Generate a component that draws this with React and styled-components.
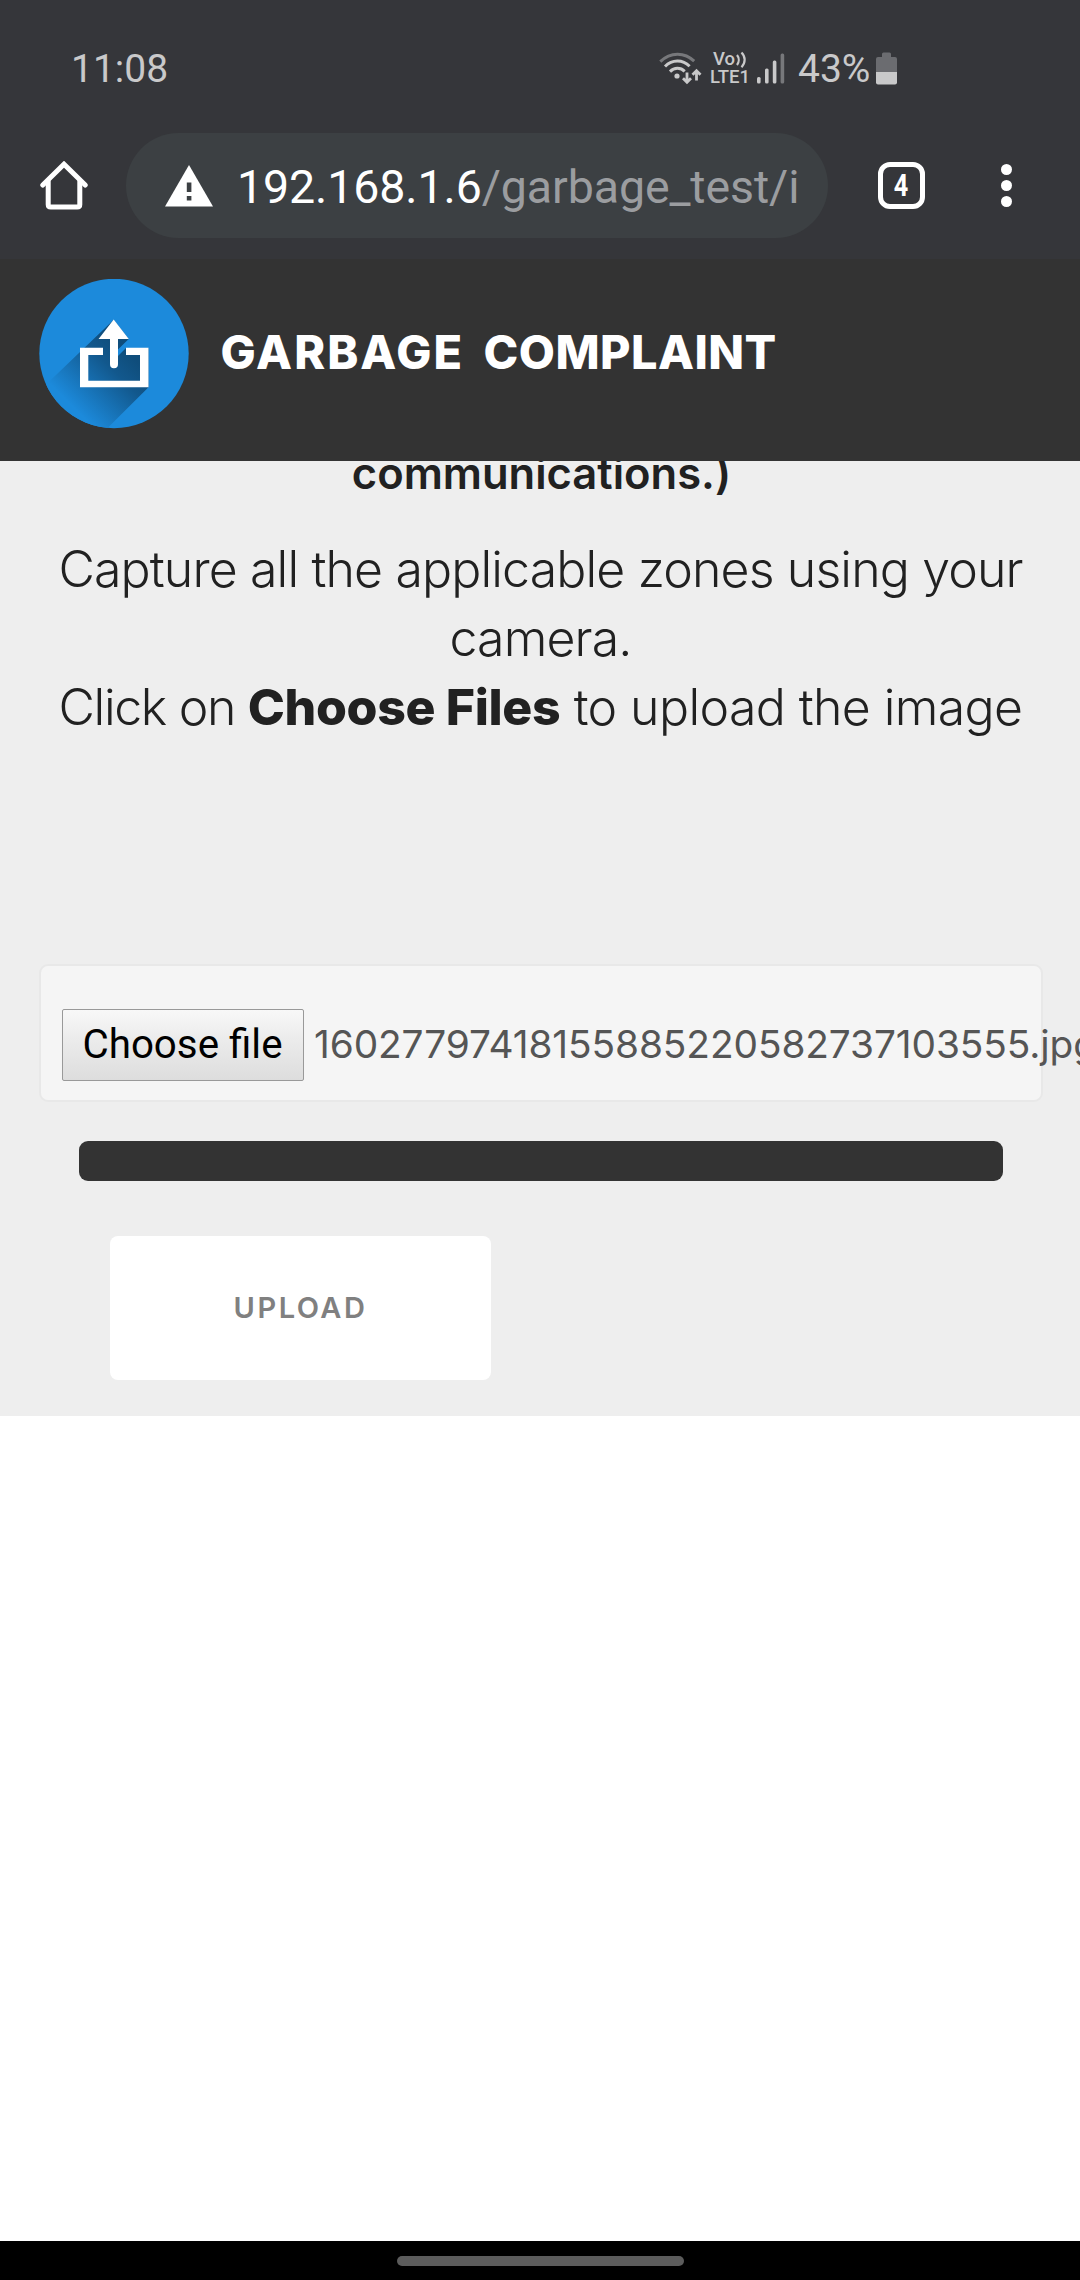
import React from "react";
import styled, { createGlobalStyle } from "styled-components";

const GlobalStyle = createGlobalStyle`
  * { box-sizing: border-box; }
  body { margin: 0; background: #fff; overflow: hidden; }
`;

const Screen = styled.div`
  width: 1080px;
  height: 2280px;
  display: flex;
  flex-direction: column;
  overflow: hidden;
  background: #fff;
  font-family: Inter, "Open Sans", sans-serif;
`;

const StatusBar = styled.div`
  height: 118px;
  flex: none;
  display: flex;
  align-items: center;
  justify-content: space-between;
  padding: 19px 183px 0 71px;
  background: #35363a;
  color: #c9c9ca;
  font: 400 39px/48px Roboto, sans-serif;
`;

const StatusIcons = styled.div`
  display: flex;
  align-items: center;
`;

const Volte = styled.div`
  display: flex;
  flex-direction: column;
  width: 38px;
  margin: 0 9px 0 8px;
  font: 500 18.5px/17.5px Roboto, sans-serif;
`;

const VolteTop = styled.div`
  display: flex;
  gap: 1px;
  padding-left: 3px;
`;

const Percent = styled.span`
  width: 78px;
  margin-left: 13px;
`;

const Toolbar = styled.div`
  height: 141px;
  flex: none;
  display: flex;
  align-items: center;
  padding: 0 0 6px 40px;
  background: #35363a;
`;

const UrlPill = styled.div`
  width: 702px;
  height: 105px;
  margin-left: 38px;
  padding-left: 39px;
  border-radius: 53px;
  display: flex;
  align-items: center;
  background: #3c4043;
`;

const Url = styled.div`
  margin-left: 24px;
  padding-top: 3px;
  color: #9b9da0;
  font: 400 46.5px/60px Roboto, sans-serif;
  letter-spacing: -0.1px;
  white-space: nowrap;
`;

const Host = styled.span`
  color: #fff;
`;

const TabCount = styled.div`
  width: 47px;
  height: 47px;
  margin-left: 50px;
  border: 5px solid #fff;
  border-radius: 12px;
  display: flex;
  align-items: center;
  justify-content: center;
  color: #fff;
  font: 700 31.5px/37px Roboto, sans-serif;
`;

const TabDigit = styled.span`
  transform: scaleX(0.8);
`;

const MenuDots = styled.div`
  margin-left: 75.5px;
  display: flex;
  flex-direction: column;
  gap: 5px;
`;

const Dot = styled.span`
  width: 11px;
  height: 11px;
  border-radius: 50%;
  background: #fff;
`;

const SiteHeader = styled.header`
  height: 202px;
  flex: none;
  display: flex;
  align-items: center;
  padding: 0 0 13px 39px;
  background: #333;
`;

const Title = styled.h1`
  margin: 0 0 0 31.5px;
  padding-bottom: 4px;
  display: flex;
  gap: 19.5px;
  color: #fff;
  font-size: 46.8px;
  line-height: 60px;
  font-weight: 800;
`;

const TitleWord = styled.span`
  letter-spacing: ${(p) => p.$spacing}px;
`;

const Content = styled.main`
  height: 955px;
  flex: none;
  overflow: hidden;
  display: flex;
  flex-direction: column;
  background: #eee;
  color: #212121;
`;

const ScrolledNote = styled.p`
  margin: -16px 0 33px;
  padding-left: 3px;
  text-align: center;
  font-size: 43.5px;
  line-height: 56px;
  font-weight: 600;
`;

const Instructions = styled.p`
  margin: 0 39px 222px 40px;
  padding-top: 1px;
  text-align: center;
  font-size: 50px;
  line-height: 69px;
  font-weight: 300;
  letter-spacing: -0.86px;
  white-space: nowrap;
`;

const Phrase = styled.span`
  letter-spacing: ${(p) => p.$spacing}px;
`;

const Strong = styled.strong`
  font-weight: 800;
  letter-spacing: -0.35px;
`;

const FileField = styled.div`
  height: 138px;
  flex: none;
  margin: 0 37px 0 39px;
  padding: 43px 0 0 21px;
  border: 2px solid #e8e8e8;
  border-radius: 9px;
  display: flex;
  align-items: flex-start;
  background: #f5f5f5;
`;

const ChooseButton = styled.button`
  width: 242px;
  height: 72px;
  flex: none;
  padding: 0 1px 0 0;
  border: 1px solid #999;
  border-radius: 2px;
  background: linear-gradient(#f8f8f8, #ececec 40%, #dddddd);
  color: #000;
  font: 400 40.3px/70px Roboto, sans-serif;
`;

const FileName = styled.span`
  margin-left: 10px;
  color: #555;
  font-size: 38.8px;
  line-height: 70px;
  letter-spacing: -0.09px;
  white-space: nowrap;
`;

const ProgressBar = styled.div`
  height: 40px;
  flex: none;
  margin: 39px 77px 0 79px;
  border-radius: 9px;
  background: #333;
`;

const UploadButton = styled.button`
  width: 381px;
  height: 144px;
  flex: none;
  margin: 55px 0 0 110px;
  padding: 0;
  border: 0;
  border-radius: 8px;
  background: #fff;
  color: #808080;
  font: 600 29px/40px Inter, sans-serif;
  letter-spacing: 2.5px;
`;

const Blank = styled.div`
  flex: 1;
`;

const GestureBar = styled.div`
  height: 39px;
  flex: none;
  display: flex;
  align-items: center;
  justify-content: center;
  background: #000;
`;

const GestureHandle = styled.span`
  width: 287px;
  height: 10px;
  border-radius: 5px;
  background: #5c5c5c;
`;

const WifiIcon = () => (
  <svg width="43" height="34" viewBox="0 0 43 34" fill="none">
    <path d="M1.3 9.6C11.5-.2 25.500-.2 35.200 9.200" stroke="#77787b" strokeWidth="3" />
    <path d="M6 14.500c7.200-7.200 17.600-7.200 24.600-.2M11 19.600c4.300-4.300 10.600-4.300 14.700-.2" stroke="#c9c9ca" strokeWidth="3" />
    <circle cx="18" cy="24" r="2.600" fill="#c9c9ca" />
    <path d="M28 20.500v9M24 26.300l4 4 4-4M37.500 28.500v-9M33.500 22.700l4-4 4 4" stroke="#c9c9ca" strokeWidth="2.800" />
  </svg>
);

const VolteWaves = () => (
  <svg width="11" height="17" viewBox="0 0 11 17" fill="none" stroke="#c9c9ca" strokeWidth="2.200">
    <path d="M1 4c2.300 2.800 2.300 7 0 10M5.500 1.500c4.200 4.200 4.200 10.500 0 14.700" />
  </svg>
);

const SignalIcon = () => (
  <svg width="28" height="31" viewBox="0 0 28 31" fill="#c9c9ca">
    <rect x="0" y="24" width="3.600" height="6.500" rx="1.500" />
    <rect x="8" y="15.500" width="3.600" height="15" rx="1.500" />
    <rect x="15.800" y="7.500" width="3.600" height="23" rx="1.500" />
    <rect x="23.600" y="0.500" width="3.600" height="30" rx="1.500" fill="#77787b" />
  </svg>
);

const BatteryIcon = () => (
  <svg width="21" height="33" viewBox="0 0 21 33">
    <path d="M6 5V2Q6 .5 7.500 .5h6Q15 .5 15 2v3h4q2 0 2 2v13H0V7q0-2 2-2z" fill="#6b6c70" />
    <path d="M0 20h21v10.500q0 2-2 2H2q-2 0-2-2z" fill="#c9c9ca" />
  </svg>
);

const HomeIcon = () => (
  <svg width="48" height="49" viewBox="0 0 48 49" fill="none" stroke="#fff" strokeWidth="5" strokeLinecap="round" strokeLinejoin="round">
    <path d="M2.800 24L24 3.200 45.200 24" strokeLinejoin="miter" />
    <path d="M8.200 20.500v23q0 2.500 2.500 2.500h26.600q2.500 0 2.500-2.500v-23" />
  </svg>
);

const WarningIcon = () => (
  <svg width="48" height="42" viewBox="0 0 48 42">
    <path d="M24 0L48 41.500H0z" fill="#fff" />
    <path d="M21.800 17.500h4.600v9.500h-4.600zM21.800 31h4.600v4.500h-4.600z" fill="#3c4043" />
  </svg>
);

const UploadLogo = () => (
  <svg width="150" height="150" viewBox="0 0 150 150">
    <defs>
      <clipPath id="disc"><circle cx="75" cy="74.500" r="74.700" /></clipPath>
      <linearGradient id="shade" gradientUnits="userSpaceOnUse" x1="88" y1="72" x2="33" y2="127">
        <stop offset="0" stopColor="#0f4d7b" />
        <stop offset="0.300" stopColor="#12588d" />
        <stop offset="1" stopColor="#1c8adb" />
      </linearGradient>
    </defs>
    <circle cx="75" cy="74.500" r="74.700" fill="#1c8adb" />
    <g clipPath="url(#disc)">
      <path d="M74.700 40.700L89.700 60 79 70.500V77L87 69h22.500v39.300L59.500 158-50 160z" fill="url(#shade)" />
    </g>
    <path d="M64 68.800H41v39.500h68.500V68.800H87v7.200h14v25.700H49.300V76H64z" fill="#fff" />
    <path d="M74.700 40.500L89.800 60H79v25.300a4 4 0 0 1-8 0V60H59.600z" fill="#fff" />
  </svg>
);

export default function App() {
  return (
    <Screen>
      <GlobalStyle />
      <StatusBar>
        <span>11:08</span>
        <StatusIcons>
          <WifiIcon />
          <Volte>
            <VolteTop>
              <span>Vo</span>
              <VolteWaves />
            </VolteTop>
            <span>LTE1</span>
          </Volte>
          <SignalIcon />
          <Percent>43%</Percent>
          <BatteryIcon />
        </StatusIcons>
      </StatusBar>
      <Toolbar>
        <HomeIcon />
        <UrlPill>
          <WarningIcon />
          <Url>
            <Host>192.168.1.6</Host>/garbage_test/i
          </Url>
        </UrlPill>
        <TabCount>
          <TabDigit>4</TabDigit>
        </TabCount>
        <MenuDots>
          <Dot />
          <Dot />
          <Dot />
        </MenuDots>
      </Toolbar>
      <SiteHeader>
        <UploadLogo />
        <Title>
          <TitleWord $spacing={2.04}>GARBAGE</TitleWord>
          <TitleWord $spacing={0.46}>COMPLAINT</TitleWord>
        </Title>
      </SiteHeader>
      <Content>
        <ScrolledNote>communications.)</ScrolledNote>
        <Instructions>
          Capture all the applicable zones using your
          <br />
          camera.
          <br />
          <Phrase $spacing={-1.35}>Click on </Phrase>
          <Strong>Choose Files</Strong>
          <Phrase $spacing={-0.62}> to upload the image</Phrase>
        </Instructions>
        <FileField>
          <ChooseButton>Choose file</ChooseButton>
          <FileName>16027797418155885220582737103555.jpg</FileName>
        </FileField>
        <ProgressBar />
        <UploadButton>UPLOAD</UploadButton>
      </Content>
      <Blank />
      <GestureBar>
        <GestureHandle />
      </GestureBar>
    </Screen>
  );
}
